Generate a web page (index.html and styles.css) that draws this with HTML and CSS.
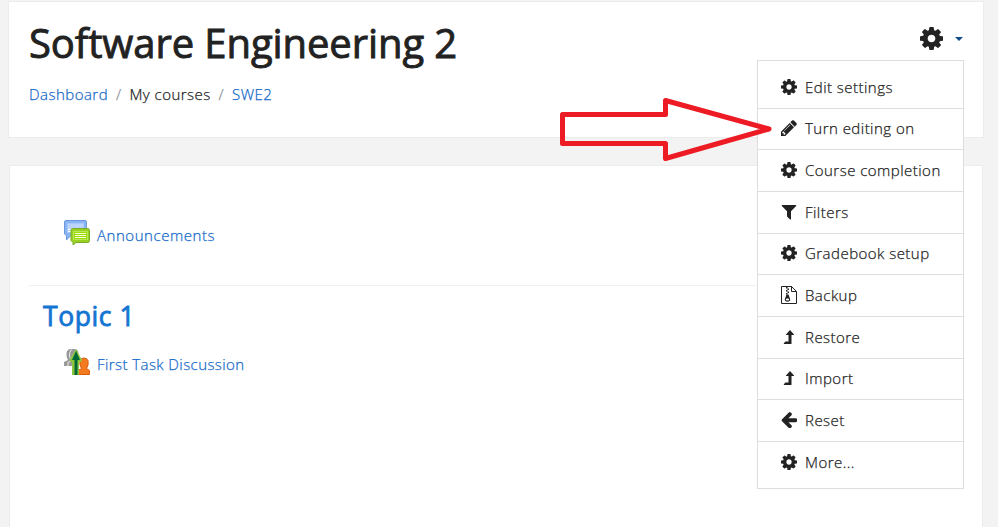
FILE: index.html
```html
<!DOCTYPE html>
<html lang="en">
<head>
<meta charset="utf-8">
<title>Software Engineering 2</title>
<link rel="stylesheet" href="styles.css">
</head>
<body>
<svg class="defs" aria-hidden="true">
  <symbol id="cog" viewBox="128 128 1536 1536"><path d="M1152 896q0-106-75-181t-181-75-181 75-75 181 75 181 181 75 181-75 75-181zm512-109v222q0 12-8 23t-20 13l-185 28q-19 54-39 91 35 50 107 138 10 12 10 25t-9 23q-27 37-99 108t-94 71q-12 0-26-9l-138-108q-44 23-91 38-16 136-29 186-7 28-36 28h-222q-14 0-24.5-8.5t-11.5-21.5l-28-184q-49-16-90-37l-141 107q-10 9-25 9-14 0-25-11-126-114-165-168-7-10-7-23 0-12 8-23 15-21 51-66.5t54-70.5q-27-50-41-99l-183-27q-13-2-21-12.5t-8-23.5v-222q0-12 8-23t19-13l186-28q14-46 39-92-40-57-107-138-10-12-10-24 0-10 9-23 26-36 98.5-107.5t94.5-71.5q13 0 26 10l138 107q44-23 91-38 16-136 29-186 7-28 36-28h222q14 0 24.5 8.5t11.5 21.5l28 184q49 16 90 37l142-107q9-9 24-9 13 0 25 10 129 119 165 170 7 8 7 22 0 12-8 23-15 21-51 66.5t-54 70.5q26 50 41 98l183 28q13 2 21 12.5t8 23.5z"/></symbol>
  <symbol id="pencil" viewBox="128 128 1536 1536"><path d="M491 1536l91-91-235-235-91 91v107h128v128h107zm523-928q0-22-22-22-10 0-17 7l-542 542q-7 7-7 17 0 22 22 22 10 0 17-7l542-542q7-7 7-17zm-54-192l416 416-832 832h-416v-416zm683 96q0 53-37 90l-166 166-416-416 166-165q36-38 90-38 53 0 91 38l235 234q37 39 37 91z"/></symbol>
  <symbol id="filter" viewBox="128 170 1536 1536"><path d="M1595 295q17 41-14 70l-493 493v742q0 42-39 59-13 5-25 5-27 0-45-19l-256-256q-19-19-19-45v-486l-493-493q-31-29-14-70 17-39 59-39h1280q42 0 59 39z"/></symbol>
  <symbol id="zip" viewBox="0 0 16 18"><path fill="none" stroke="currentColor" d="M.5.5h10l5 5v12H.5zM10.500.5v5h5"/><path d="M5 1h1.500v1.500H5zM6.500 2.500H8V4H6.500zM5 4h1.500v1.500H5zM6.500 5.500H8V7H6.500zM5 7h1.500v1.500H5z"/><path fill-rule="evenodd" d="M5.500 8.500h2l1.700 4.700c.3 1.500-1 2.500-2.700 2.500s-3-1-2.700-2.500zm1 4c-.9 0-1.600.4-1.600 1s.7 1 1.600 1 1.600-.4 1.600-1-.7-1-1.600-1z"/></symbol>
  <symbol id="up" viewBox="0 0 16 16"><path d="M9 1l4 4.500c.2.400 0 .6-.3.600H10.500v8.300c0 .4-.2.600-.6.600H3.200c-.4 0-.6-.5-.3-.8l1.400-1.600c.2-.2.300-.2.500-.2H7.500V6.100H5.300c-.4 0-.6-.3-.3-.6z"/></symbol>
  <symbol id="left" viewBox="128 170 1536 1536"><path d="M1664 896v128q0 53-32.500 90.500t-84.500 37.500h-704l293 294q38 36 38 90t-38 90l-75 76q-37 37-90 37-52 0-91-37l-651-652q-37-37-37-90 0-52 37-91l651-650q38-38 91-38 52 0 90 38l75 74q38 38 38 91t-38 91l-293 293h704q52 0 84.500 37.500t32.500 90.500z"/></symbol>
</svg>

<header class="card page-header">
  <div>
    <h1>Software Engineering 2</h1>
    <nav class="breadcrumb"><a href="#">Dashboard</a><i>/</i><span>My courses</span><i>/</i><a href="#">SWE2</a></nav>
  </div>
  <div class="actions">
    <svg class="gear"><use href="#cog"/></svg><span class="caret"></span>
    <ul class="menu">
      <li><svg><use href="#cog"/></svg><span>Edit settings</span></li>
      <li><svg><use href="#pencil"/></svg><span>Turn editing on</span></li>
      <li><svg><use href="#cog"/></svg><span>Course completion</span></li>
      <li><svg><use href="#filter"/></svg><span>Filters</span></li>
      <li><svg><use href="#cog"/></svg><span>Gradebook setup</span></li>
      <li><svg class="tall"><use href="#zip"/></svg><span>Backup</span></li>
      <li><svg><use href="#up"/></svg><span>Restore</span></li>
      <li><svg><use href="#up"/></svg><span>Import</span></li>
      <li><svg><use href="#left"/></svg><span>Reset</span></li>
      <li><svg><use href="#cog"/></svg><span>More...</span></li>
    </ul>
  </div>
</header>

<main class="card content">
  <section class="general">
    <a class="activity" href="#">
      <svg viewBox="0 0 26 26">
        <path fill="#8ab4f4" stroke="#6b98df" d="M2 .5h19q1.500 0 1.500 1.500v12q0 1.500-1.500 1.500H7L2.500 20v-4.500L.5 14V2Q.5.500 2 .5z"/>
        <path fill="#bdd3fa" stroke="#a8c9fb" d="M3.500 3.500h16v9h-16z"/>
        <path stroke="#fff" d="M4 9.500h5M4 11.500h4"/>
        <path fill="#9ad021" stroke="#76ad25" d="M8.500 8.500h15q2 0 2 2v10q0 2-2 2H12L9 25v-2.500l-2-2v-10q0-2 1.500-2z"/>
        <path fill="#9edb00" stroke="#b9e85a" d="M9.500 11.500h14v8h-14z"/>
        <path stroke="#f5ffd6" d="M11 13.500h11M11 15.500h11M11 17.500h11"/>
      </svg>
      <span>Announcements</span>
    </a>
  </section>
  <section class="topic">
    <h2>Topic 1</h2>
    <a class="activity" href="#">
      <svg viewBox="0 0 26 26">
        <path fill="#999" d="M0 17v-4l4-2q-2-3-1.500-7Q3 0 7 0h3q4 0 4.500 4 .5 4-2 7v6z"/>
        <path fill="none" stroke="#ececec" d="M7.500.5Q5 3 5.500 7q.5 3 2 4.500L4 13.500V17"/>
        <path fill="#f47a20" stroke="#d95c0c" d="M14 25.500v-4l3.500-2q-2.500-4-1.500-8 1-2.500 4-2.500t4 2.500q1 4-1.500 8l3 2v4z"/>
        <path fill="#8cc63f" d="M12 0l6 11-1 2h-2v13H8V13H6V10z"/>
        <path fill="#006837" d="M12 2l4 9h-2.500v15h-3V11H8z"/>
      </svg>
      <span>First Task Discussion</span>
    </a>
  </section>
</main>

<svg class="pointer" viewBox="0 0 220 70"><path d="M7.500 19.500H110.500V5.500L214 34 110.500 63.500V48.500H7.500z"/></svg>
</body>
</html>
```

FILE: styles.css
```css
* { box-sizing: border-box; }
html { overflow: hidden; }
body {
  margin: 0;
  padding: 1px 14px 0 8px;
  height: 527px;
  overflow: hidden;
  position: relative;
  background: #f3f3f3;
  color: #222;
  font: 300 15px/22px "Open Sans", sans-serif;
  letter-spacing: 0.47px;
  -webkit-text-stroke: 0.25px currentColor;
}
a { color: #1469c9; text-decoration: none; }
.defs { position: absolute; width: 0; height: 0; }
svg { fill: currentColor; flex: none; }
.card { background: #fff; border: 1px solid #ececec; }
.page-header {
  display: flex;
  justify-content: space-between;
  height: 137px;
  padding: 18px 19px 0 20px;
}
h1 {
  margin: 0;
  font-size: 40px;
  line-height: 46px;
  font-weight: 400;
  letter-spacing: -0.09px;
  white-space: nowrap;
  -webkit-text-stroke: 0.9px currentColor;
}
.breadcrumb { margin-top: 17px; display: flex; }
.breadcrumb i { font-style: normal; color: #868e96; margin: 0 7.900px; }
.actions { position: relative; display: flex; height: 37px; align-items: center; }
.gear { width: 23px; height: 23px; }
.caret {
  margin: 0 1px 0 12px;
  border: 4.500px solid transparent;
  border-top-color: #0f4c88;
  border-bottom: 0;
}
.menu {
  position: absolute;
  z-index: 1;
  top: 40px;
  right: 0;
  width: 207px;
  height: 429px;
  margin: 0;
  padding: 6px 0 4px;
  list-style: none;
  background: #fff;
  border: 1px solid #dedede;
}
.menu li {
  display: flex;
  align-items: center;
  height: 41.670px;
  padding: 0 0 1px 23px;
  gap: 8px;
  border-bottom: 1px solid #dedede;
}
.menu li:last-child { border-bottom: 0; }
.menu svg { width: 16px; height: 16px; }
.menu .tall { height: 18px; }
.content { margin: 27px 0 0 1px; height: 362px; padding: 0 20px 0 19px; width: 974px; border-bottom: 0; }
.general { height: 120px; padding: 54px 0 0 35px; border-bottom: 1px solid #f1f1f1; }
.topic { padding: 14px 0 0 14px; }
h2 {
  margin: 0;
  color: #1575d2;
  font-size: 26.500px;
  line-height: 32px;
  font-weight: 400;
  letter-spacing: 0.6px;
  -webkit-text-stroke: 0.8px currentColor;
}
.activity { display: flex; gap: 7px; height: 32px; }
.activity svg { width: 26px; height: 26px; }
.activity span { padding-top: 4px; }
.general .activity { letter-spacing: 0.54px; }
.topic .activity { margin: 17px 0 0 21px; letter-spacing: 0.43px; }
.pointer {
  position: absolute;
  z-index: 2;
  left: 555px;
  top: 95px;
  width: 220px;
  height: 70px;
}
.pointer path { fill: none; stroke: #ed1c24; stroke-width: 5; stroke-linejoin: round; }
```
